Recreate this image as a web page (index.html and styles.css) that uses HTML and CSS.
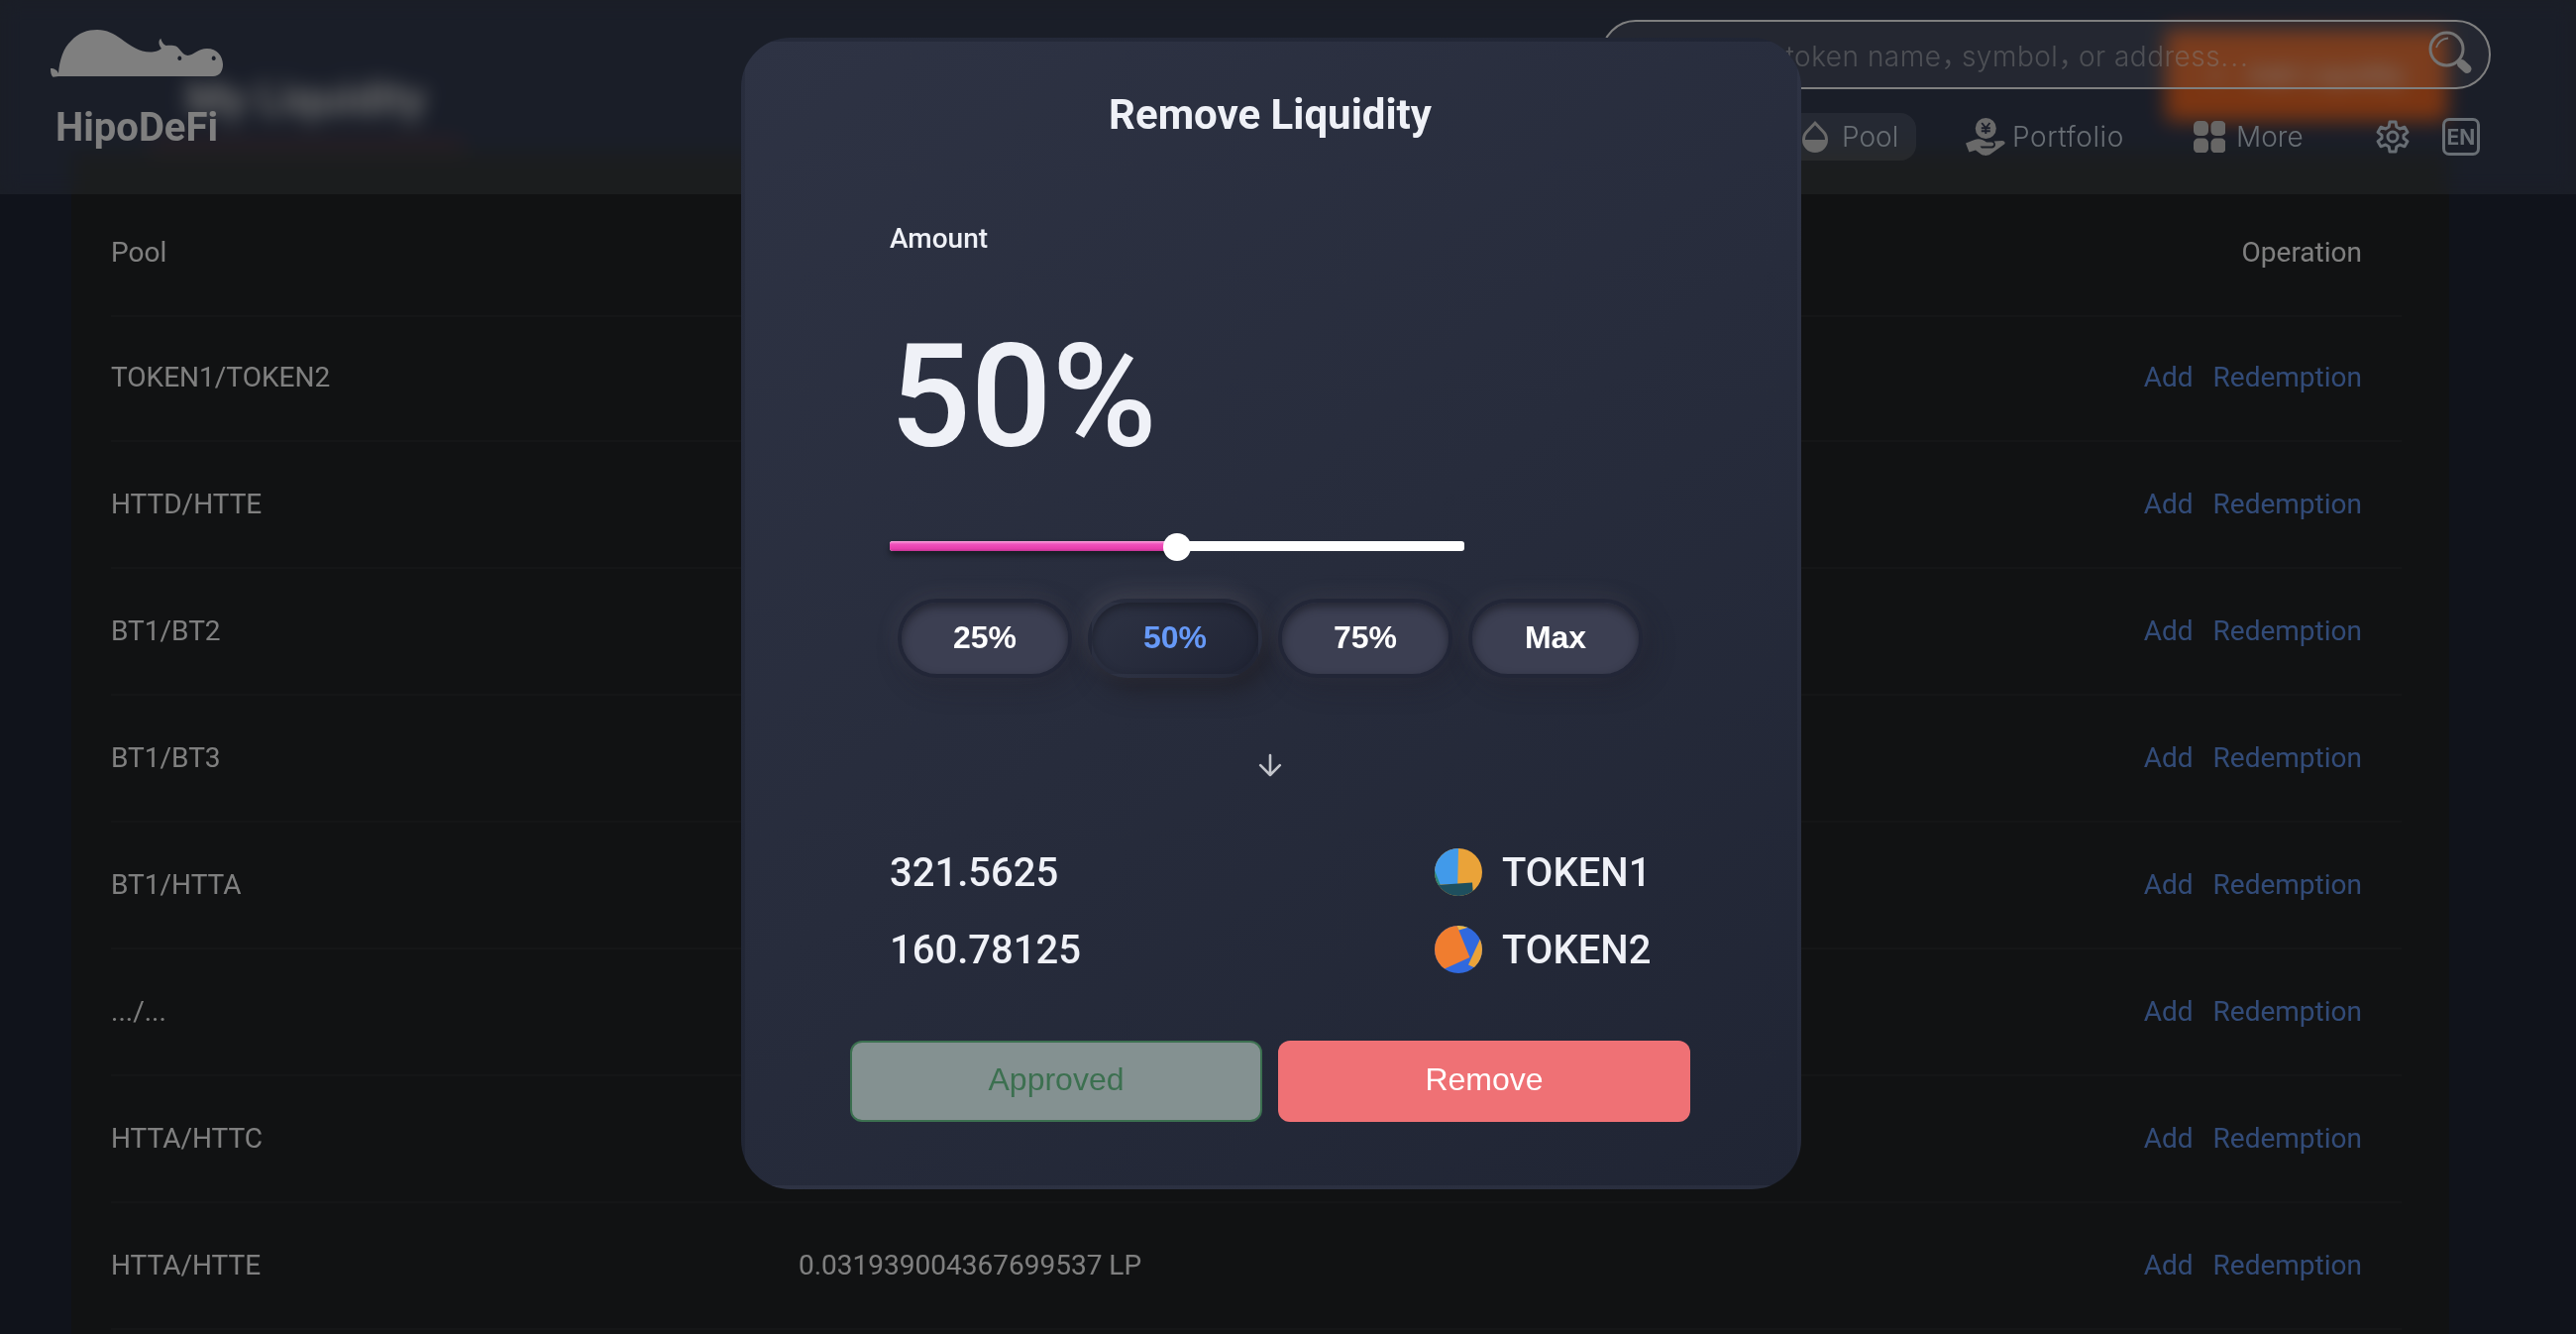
FILE: index.html
```html
<!DOCTYPE html>
<html lang="en">
<head>
<meta charset="utf-8">
<title>HipoDeFi - My Liquidity</title>
<link rel="stylesheet" href="styles.css">
</head>
<body>
<main class="page">
  <div class="page-head">
    <h1 class="page-title">My Liquidity</h1>
    <button class="add-btn"><span>+</span><span>Add Liquidity</span></button>
  </div>
  <div class="tab-line"></div>
  <section class="panel">
    <div class="row row-head"><span class="pool">Pool</span><span class="ops">Operation</span></div>
    <div class="row row-first"><span class="pool">TOKEN1/TOKEN2</span><span class="ops"><a>Add</a><a>Redemption</a></span></div>
    <div class="row"><span class="pool">HTTD/HTTE</span><span class="ops"><a>Add</a><a>Redemption</a></span></div>
    <div class="row"><span class="pool">BT1/BT2</span><span class="ops"><a>Add</a><a>Redemption</a></span></div>
    <div class="row"><span class="pool">BT1/BT3</span><span class="ops"><a>Add</a><a>Redemption</a></span></div>
    <div class="row"><span class="pool">BT1/HTTA</span><span class="ops"><a>Add</a><a>Redemption</a></span></div>
    <div class="row"><span class="pool">.../...</span><span class="ops"><a>Add</a><a>Redemption</a></span></div>
    <div class="row"><span class="pool">HTTA/HTTC</span><span class="ops"><a>Add</a><a>Redemption</a></span></div>
    <div class="row"><span class="pool">HTTA/HTTE</span><span class="amount">0.031939004367699537 LP</span><span class="ops"><a>Add</a><a>Redemption</a></span></div>
    <div class="row"></div>
  </section>
</main>

<header class="topbar">
  <div class="brand">
    <svg class="hippo" viewBox="0 0 174 48" width="174" height="48">
      <path fill="#fff" fill-rule="evenodd" d="M0 39C4 39 7 41 8 44C9 31 13 18 21 11C28 3 38 0 47 0C57 0 64 4 71 9C82 17 92 24 104 22.300C108 21.500 110 20.500 112 19C109 15 108.500 11 111.300 8.700C112 12 113.500 14.500 116.500 16C120 15.600 124 15.500 126.500 16.500C131 19 133 25.500 138.500 26C145 25.500 149 19 158 19C168 19 173.500 26 174 35C174 42 170.500 47 164 47L8 47L2.500 47.800C.500 46 0 43 0 39ZM130.300 26.500A2 2.300 0 1 0 130.310 26.500ZM164.700 26.500A2 2.300 0 1 0 164.710 26.500Z"/>
    </svg>
    <span class="brand-name">HipoDeFi</span>
  </div>
  <div class="topbar-right">
    <div class="search">
      <span class="search-text">Enter token name<span class="comma">，</span>symbol<span class="comma">，</span>or address<span class="dots">...</span></span>
      <svg class="search-icon" viewBox="0 0 44 44" width="44" height="44" fill="none" stroke="#e6e6e6">
        <circle cx="18.500" cy="18.500" r="16.500" stroke-width="3"/>
        <path d="M8 17C10 11 14 8 20 7.500" stroke-width="1.800"/>
        <path d="M29.500 30L33 33.500" stroke-width="4"/>
        <path d="M33.500 33.500L39 38.500" stroke-width="9" stroke-linecap="round"/>
      </svg>
    </div>
    <nav class="nav">
      <a class="nav-item nav-pool">
        <svg viewBox="0 0 26 32" width="26" height="32"><path fill="#d2d2d2" fill-rule="evenodd" d="M13 0L22.200 9.800A13 13 0 1 1 3.800 9.800ZM3 19H23C23 16 22 13.800 20.300 12L13 4.300L5.700 12C4 13.800 3 16 3 19Z"/></svg>
        <span>Pool</span>
      </a>
      <a class="nav-item nav-portfolio">
        <svg viewBox="0 0 40 38" width="40" height="38">
          <circle cx="20.300" cy="10.500" r="10.500" fill="#d2d2d2"/>
          <path d="M16.200 5L20.300 10L24.400 5M20.300 10V16M15.800 10.300H24.800M15.800 13.200H24.800" fill="none" stroke="#363c54" stroke-width="1.900"/>
          <path fill="#d2d2d2" d="M0 25.500L9 22C14 20 18 22.500 21 24.500H26C29 25 29 28 26 28.500H14.500L16 30.500H27C31 29.500 30.500 25.500 28.500 23.500L37 23C39 23 40.500 25 39 26.500L25 36.500C22 38.500 18 38 16 37L10 32.500L3.500 34.500Z"/>
        </svg>
        <span>Portfolio</span>
      </a>
      <a class="nav-item nav-more">
        <svg viewBox="0 0 32 32" width="32" height="32" fill="#cfcccb"><rect width="15" height="15" rx="5"/><rect x="17.500" width="15" height="15" rx="5"/><rect y="17.500" width="15" height="15" rx="5"/><rect x="17.500" y="17.500" width="15" height="15" rx="5"/></svg>
        <span>More</span>
      </a>
      <a class="nav-icon nav-gear">
        <svg viewBox="0 0 34 34" width="34" height="34" fill="none" stroke="#d0dce8" stroke-width="3" stroke-linejoin="round"><path d="M14 2H20L20.800 7L24.200 9L29 7.200L32 12.400L28 15.500V18.500L32 21.600L29 26.800L24.200 25L20.800 27L20 32H14L13.200 27L9.800 25L5 26.800L2 21.600L6 18.500V15.500L2 12.400L5 7.200L9.800 9L13.200 7Z"/><circle cx="17" cy="17" r="5"/></svg>
      </a>
      <a class="nav-icon lang">EN</a>
    </nav>
  </div>
</header>

<div class="overlay">
  <div class="modal" role="dialog">
    <h2 class="modal-title">Remove Liquidity</h2>
    <div class="label">Amount</div>
    <div class="percent">50%</div>
    <div class="slider"><div class="slider-fill"></div><div class="slider-thumb"></div></div>
    <div class="presets">
      <button class="preset">25%</button>
      <button class="preset preset-active">50%</button>
      <button class="preset">75%</button>
      <button class="preset">Max</button>
    </div>
    <svg class="arrow" viewBox="0 0 24 24" width="24" height="24" fill="none" stroke="#c3c5cb" stroke-width="2.600" stroke-linecap="round" stroke-linejoin="round"><path d="M12 2V22M2.200 12.200L12 22L21.800 12.200"/></svg>
    <div class="token-row">
      <span>321.5625</span>
      <span class="token">
        <svg viewBox="0 0 48 48" width="48" height="48"><clipPath id="c1"><circle cx="24" cy="24" r="24"/></clipPath><g clip-path="url(#c1)"><path fill="#eaa339" d="M0 0H48V48H0Z"/><path fill="#419aea" d="M0 0H24L23.200 36L5.500 36.500L0 24Z"/><path fill="#26867d" d="M0 22L5.500 36.500L0 48Z"/><path fill="#1e4f5e" d="M2 37L38 34.500L39 48H2Z"/></g></svg>
        <span>TOKEN1</span>
      </span>
    </div>
    <div class="token-row">
      <span>160.78125</span>
      <span class="token">
        <svg viewBox="0 0 48 48" width="48" height="48"><clipPath id="c2"><circle cx="24" cy="24" r="24"/></clipPath><g clip-path="url(#c2)"><path fill="#3069de" d="M0 0H48V48H0Z"/><path fill="#f07d2f" d="M0 0H22.500L35.500 32L9 44L0 48Z"/><path fill="#f3b73e" d="M22.500 0H36L33 2L24.500 4.500Z"/><path fill="#eaa339" d="M48 9L34 39.500L44 44L54 20Z"/></g></svg>
        <span>TOKEN2</span>
      </span>
    </div>
    <div class="actions">
      <button class="btn btn-approved">Approved</button>
      <button class="btn btn-remove">Remove</button>
    </div>
  </div>
</div>
</body>
</html>
```

FILE: styles.css
```css
* {
  box-sizing: border-box;
}

html,
body {
  margin: 0;
  height: 1346px;
  overflow: hidden;
}

body {
  background: #202636;
  color: #fff;
  font-family: Roboto, "Liberation Sans", sans-serif;
}

button {
  padding: 0;
  border: 0;
  color: inherit;
  font-family: "Liberation Sans", Arial, sans-serif;
}

/* Page content */
.page {
  width: 2400px;
  height: 1346px;
  margin-left: 72px;
  overflow: hidden;
}

.page-head {
  display: flex;
  align-items: flex-start;
  justify-content: space-between;
  height: 138px;
  padding: 30px 2px 0 116px;
}

.page-title {
  margin: 44px 0 0;
  font-size: 44px;
  line-height: 52px;
  font-weight: 700;
  color: #e2e2e2;
}

.add-btn {
  display: flex;
  align-items: center;
  justify-content: center;
  gap: 22px;
  width: 284px;
  height: 92px;
  background: #cc6430;
  color: #fff;
  font-size: 28px;
}

.tab-line {
  width: 316px;
  height: 14px;
  margin-left: 80px;
  background: rgba(255, 90, 40, 0.1);
}

.panel {
  padding: 40px 48px 0 40px;
  background: #222527;
}

.row {
  display: flex;
  align-items: center;
  height: 128px;
  padding: 0 40px 1px 0;
  border-bottom: 2px solid #2a2c2f;
  font-size: 28px;
  font-weight: 400;
}

.row-head {
  padding-bottom: 2px;
}

.row-first {
  height: 126px;
  padding-bottom: 4px;
}

.pool {
  width: 694px;
}

.ops {
  display: flex;
  gap: 20px;
  margin-left: auto;
}

.ops a {
  color: #6496f0;
}

/* Top bar */
.topbar {
  position: fixed;
  inset: 0 0 auto 0;
  display: flex;
  justify-content: space-between;
  height: 196px;
  padding: 20px 86px 0 51px;
  background: rgba(255, 255, 255, 0.1);
  backdrop-filter: saturate(150%) blur(10px);
}

.brand {
  display: flex;
  flex-direction: column;
  align-items: center;
  width: 174px;
  padding-top: 10px;
}

.brand-name {
  margin-top: 28px;
  font-size: 40px;
  line-height: 46px;
  font-weight: 700;
}

.topbar-right {
  width: 898px;
}

.search {
  display: flex;
  align-items: center;
  justify-content: space-between;
  height: 70px;
  padding: 0 17px 0 106px;
  border: 2px solid #fff;
  border-radius: 35px;
  background: rgba(255, 255, 255, 0.1);
}

.search-text {
  color: rgba(255, 255, 255, 0.46);
  font-family: Inter, "Noto Sans CJK SC", sans-serif;
  font-size: 28px;
  font-weight: 350;
  letter-spacing: 0.5px;
  white-space: nowrap;
}

.comma {
  margin-right: -8px;
}

.dots {
  letter-spacing: 2px;
}

.search-icon {
  margin-top: -4px;
}

.nav {
  display: flex;
  align-items: center;
  justify-content: flex-end;
  height: 48px;
  margin-top: 24px;
  padding-right: 11px;
  color: #d0dce8;
  font-family: Inter, "Liberation Sans", sans-serif;
  font-size: 28px;
  font-weight: 350;
}

.nav-item {
  display: flex;
  align-items: center;
  height: 48px;
}

.nav-pool {
  gap: 14px;
  width: 131px;
  padding-left: 16px;
  border-radius: 16px;
  background: rgba(255, 255, 255, 0.12);
}

.nav-portfolio {
  gap: 7px;
  width: 230px;
  margin-left: 50px;
  letter-spacing: 0.6px;
}

.nav-more {
  gap: 11px;
  width: 184px;
}

.nav-gear {
  display: flex;
}

.lang {
  display: flex;
  align-items: center;
  justify-content: center;
  width: 38px;
  height: 38px;
  margin-left: 33px;
  border: 3px solid #d0dce8;
  border-radius: 7px;
  font-size: 21px;
  font-weight: 700;
}

/* Dialog */
.overlay {
  position: fixed;
  inset: 0;
  display: flex;
  align-items: flex-start;
  justify-content: center;
  padding: 38px 34px 0 0;
  background: rgba(0, 0, 0, 0.5);
}

.modal {
  display: flex;
  flex-direction: column;
  width: 1070px;
  height: 1162px;
  padding: 0 108px 0 146px;
  border: 4px solid transparent;
  border-radius: 50px;
  background: linear-gradient(145deg, #2e3344, #202534);
  color: #eff1f7;
}

.modal-title {
  margin: 49px 0 0 -40px;
  font-size: 42px;
  line-height: 50px;
  font-weight: 700;
  text-align: center;
}

.label {
  margin-top: 84px;
  font-size: 28px;
  line-height: 32px;
  font-weight: 500;
}

.percent {
  margin-top: 60px;
  font-size: 144px;
  line-height: 168px;
  font-weight: 500;
}

.slider {
  position: relative;
  width: 580px;
  height: 10px;
  margin-top: 61px;
  border-radius: 3px;
  background: #fff;
}

.slider-fill {
  width: 50%;
  height: 10px;
  border-radius: 3px 0 0 3px;
  background: linear-gradient(#f8a6dc 0, #f052bc 30%, #e83fae 75%, #c43595);
  box-shadow: 0 4px 6px rgba(0, 0, 0, 0.45);
}

.slider-thumb {
  position: absolute;
  left: 50%;
  top: -8px;
  width: 28px;
  height: 28px;
  margin-left: -14px;
  border-radius: 50%;
  background: #fff;
}

.presets {
  display: flex;
  gap: 16px;
  margin: 48px 0 0 8px;
}

.preset {
  width: 176px;
  height: 80px;
  padding-bottom: 2px;
  border: 4px solid #222637;
  border-radius: 40px;
  background: #3c3f52;
  color: #fff;
  font-size: 32px;
  font-weight: 700;
  box-shadow: inset 0 4px 8px rgba(20, 22, 30, 0.6), -4px -6px 24px rgba(255, 240, 240, 0.06), 6px 8px 28px rgba(30, 28, 36, 0.3);
}

.preset-active {
  border-color: transparent;
  background: linear-gradient(145deg, #2e3344, #202434);
  color: #6699f7;
  box-shadow: inset 0 4px 8px rgba(20, 22, 30, 0.6), -4px -8px 24px rgba(255, 240, 240, 0.1), 8px 12px 24px rgba(30, 28, 36, 0.7);
}

.arrow {
  align-self: center;
  margin: 76px 0 57px -40px;
}

.token-row {
  display: flex;
  align-items: center;
  justify-content: space-between;
  height: 78px;
  font-size: 40px;
  font-weight: 500;
}

.token {
  display: flex;
  align-items: center;
  gap: 20px;
  width: 258px;
}

.actions {
  display: flex;
  gap: 16px;
  margin: 53px 0 0 -40px;
}

.btn {
  width: 416px;
  height: 82px;
  flex: none;
  padding-bottom: 4px;
  border-radius: 12px;
  font-size: 32px;
}

.btn-approved {
  border: 2px solid #3c7050;
  background: #849191;
  color: #3c7050;
}

.btn-remove {
  background: #ef7175;
  color: #fff;
}
```
